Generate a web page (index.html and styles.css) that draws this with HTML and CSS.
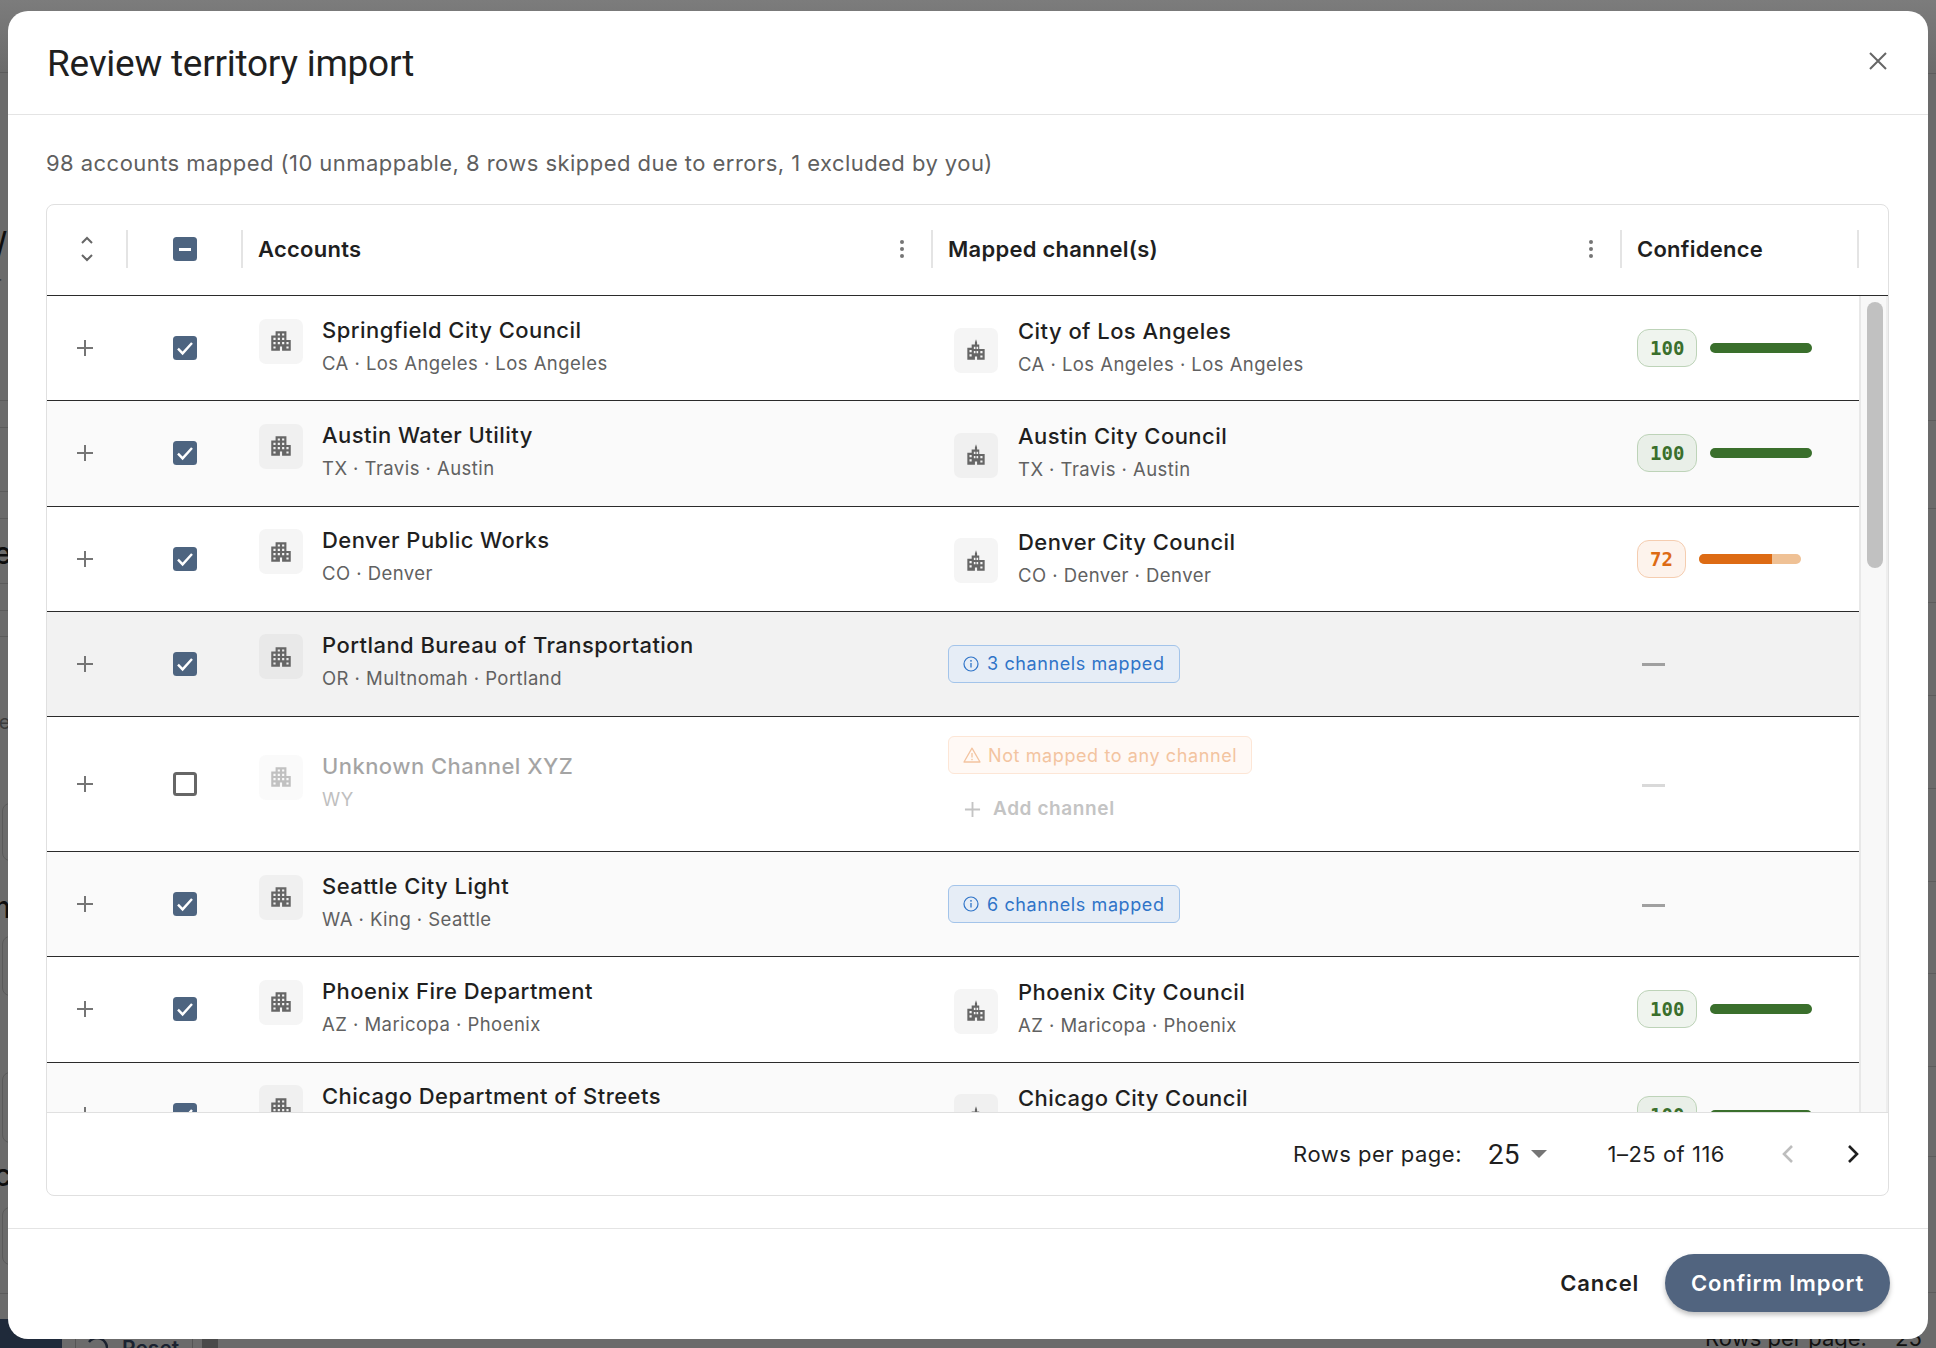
FILE: index.html
```html
<!DOCTYPE html>
<html lang="en">
<head>
  <meta charset="UTF-8" />
  <title>Review territory import</title>
  <link rel="stylesheet" href="styles.css">
</head>
<body>
  <svg class="defs" width="0" height="0">
    <symbol id="i-apartment" viewBox="0 0 24 24"><path d="M17 11V3H7v4H3v14h8v-4h2v4h8V11h-4zM7 19H5v-2h2v2zm0-4H5v-2h2v2zm0-4H5V9h2v2zm4 4H9v-2h2v2zm0-4H9V9h2v2zm0-4H9V5h2v2zm4 8h-2v-2h2v2zm0-4h-2V9h2v2zm0-4h-2V5h2v2zm4 12h-2v-2h2v2zm0-4h-2v-2h2v2z"/></symbol>
    <symbol id="i-tower" viewBox="0 0 24 24"><path fill-rule="evenodd" d="M12 2l1 3v2h2v4h5v10h-7v-3h-2v3H4V10h4V7h3V5zM6 12v2h2v-2zm0 4v2h2v-2zm4-7v2h1.5V9zm2.5 0v2H14V9zM10 13v2h1.5v-2zm2.5 0v2H14v-2zM16 13v2h2v-2zm0 4v2h2v-2z"/></symbol>
    <symbol id="i-check" viewBox="0 0 24 24"><rect x="0" y="0" width="24" height="24" rx="3.5" fill="#4d6480"/><path d="M5 12.6l4.6 4.8L19 7" fill="none" stroke="#fff" stroke-width="2.4"/></symbol>
    <symbol id="i-plus" viewBox="0 0 18 18"><path d="M9 1v16M1 9h16" fill="none" stroke="currentColor" stroke-width="2"/></symbol>
    <symbol id="i-info" viewBox="0 0 16 16"><circle cx="8" cy="8" r="7" fill="none" stroke="currentColor" stroke-width="1.2"/><path d="M8 7v4.4" stroke="currentColor" stroke-width="1.3"/><circle cx="8" cy="4.8" r=".9" fill="currentColor"/></symbol>
    <symbol id="i-warn" viewBox="0 0 18 16"><path d="M9 1.2L17 15H1z" fill="none" stroke="currentColor" stroke-width="1.3" stroke-linejoin="round"/><path d="M9 6v4.6" stroke="currentColor" stroke-width="1.3"/><circle cx="9" cy="12.6" r=".8" fill="currentColor"/></symbol>
    <symbol id="i-kebab" viewBox="0 0 6 20"><circle cx="3" cy="3" r="2"/><circle cx="3" cy="10" r="2"/><circle cx="3" cy="17" r="2"/></symbol>
  </svg>

  <!-- page that sits under the dialog -->
  <div class="under">
    <span class="under-line" style="top:72px"></span>
    <span class="under-line" style="top:400px"></span>
    <span class="under-line" style="top:427px"></span>
    <span class="under-line" style="top:491px"></span>
    <span class="under-line" style="top:518px"></span>
    <span class="under-line" style="top:583px"></span>
    <span class="under-line" style="top:610px"></span>
    <span class="under-line" style="top:636px"></span>
    <span class="under-line" style="top:1293px"></span>
    <span class="under-line right" style="top:73px"></span>
    <span class="under-line right" style="top:420px"></span>
    <span class="under-line right" style="top:508px"></span>
    <span class="under-line right" style="top:602px"></span>
    <span class="under-line right" style="top:695px"></span>
    <span class="under-line right" style="top:788px"></span>
    <span class="under-line right" style="top:881px"></span>
    <span class="under-line right" style="top:973px"></span>
    <span class="under-line right" style="top:1066px"></span>
    <span class="under-line right" style="top:1156px"></span>
    <span class="under-line right" style="top:1292px"></span>
    <span class="under-text big slash" style="top:228px">/</span>
    <span class="under-text soft" style="top:268px">r</span>
    <span class="under-text big" style="top:538px">e</span>
    <span class="under-text soft" style="top:707px">le</span>
    <span class="under-text big" style="top:892px">m</span>
    <span class="under-text big" style="top:1160px">c</span>
    <span class="under-box" style="top:803px;height:58px"></span>
    <span class="under-box" style="top:936px;height:60px"></span>
    <span class="under-box" style="top:1072px;height:71px"></span>
    <span class="under-box" style="top:1207px;height:58px"></span>
    <div class="under-nav"></div>
    <div class="under-reset">
      <svg viewBox="0 0 24 24"><path d="M5 6a10 10 0 1 1-2 6" fill="none" stroke="#1a2230" stroke-width="2.4"/></svg>
      Reset
    </div>
    <div class="under-sq"></div>
    <div class="under-rows">Rows per page: <b>25</b></div>
  </div>

  <div class="dialog">
    <header class="dialog-head">
      <h1>Review territory import</h1>
      <svg class="close" viewBox="0 0 20 20"><path d="M2 2l16 16M18 2L2 18" fill="none" stroke="#666" stroke-width="2"/></svg>
    </header>

    <div class="dialog-body">
      <p class="summary">98 accounts mapped (10 unmappable, 8 rows skipped due to errors, 1 excluded by you)</p>

      <div class="table">
        <div class="thead">
          <div class="th th-center">
            <svg class="sort" viewBox="0 0 14 26"><path d="M2 7l5-5 5 5M2 19l5 5 5-5" fill="none" stroke="#666" stroke-width="2"/></svg>
          </div>
          <div class="th th-center"><span class="box-minus"></span></div>
          <div class="th">Accounts<svg class="kebab"><use href="#i-kebab"/></svg></div>
          <div class="th">Mapped channel(s)<svg class="kebab"><use href="#i-kebab"/></svg></div>
          <div class="th">Confidence</div>
        </div>

        <div class="tbody">
          <div class="rows">
            <div class="row">
              <div class="c-toggle"><svg class="plus"><use href="#i-plus"/></svg></div>
              <div class="c-check"><svg class="box"><use href="#i-check"/></svg></div>
              <div class="account">
                <span class="org"><svg><use href="#i-apartment"/></svg></span>
                <div class="org-text"><div class="name">Springfield City Council</div><div class="sub">CA · Los Angeles · Los Angeles</div></div>
              </div>
              <div class="mapped">
                <span class="org"><svg><use href="#i-tower"/></svg></span>
                <div class="org-text"><div class="name">City of Los Angeles</div><div class="sub">CA · Los Angeles · Los Angeles</div></div>
              </div>
              <div class="conf"><span class="score">100</span><span class="bar"><i class="fill" style="width:100%"></i></span></div>
            </div>

            <div class="row alt">
              <div class="c-toggle"><svg class="plus"><use href="#i-plus"/></svg></div>
              <div class="c-check"><svg class="box"><use href="#i-check"/></svg></div>
              <div class="account">
                <span class="org"><svg><use href="#i-apartment"/></svg></span>
                <div class="org-text"><div class="name">Austin Water Utility</div><div class="sub">TX · Travis · Austin</div></div>
              </div>
              <div class="mapped">
                <span class="org"><svg><use href="#i-tower"/></svg></span>
                <div class="org-text"><div class="name">Austin City Council</div><div class="sub">TX · Travis · Austin</div></div>
              </div>
              <div class="conf"><span class="score">100</span><span class="bar"><i class="fill" style="width:100%"></i></span></div>
            </div>

            <div class="row">
              <div class="c-toggle"><svg class="plus"><use href="#i-plus"/></svg></div>
              <div class="c-check"><svg class="box"><use href="#i-check"/></svg></div>
              <div class="account">
                <span class="org"><svg><use href="#i-apartment"/></svg></span>
                <div class="org-text"><div class="name">Denver Public Works</div><div class="sub">CO · Denver</div></div>
              </div>
              <div class="mapped">
                <span class="org"><svg><use href="#i-tower"/></svg></span>
                <div class="org-text"><div class="name">Denver City Council</div><div class="sub">CO · Denver · Denver</div></div>
              </div>
              <div class="conf mid"><span class="score">72</span><span class="bar"><i class="fill" style="width:72%"></i></span></div>
            </div>

            <div class="row hover">
              <div class="c-toggle"><svg class="plus"><use href="#i-plus"/></svg></div>
              <div class="c-check"><svg class="box"><use href="#i-check"/></svg></div>
              <div class="account">
                <span class="org"><svg><use href="#i-apartment"/></svg></span>
                <div class="org-text"><div class="name">Portland Bureau of Transportation</div><div class="sub">OR · Multnomah · Portland</div></div>
              </div>
              <div class="mapped-chip"><span class="chip"><svg><use href="#i-info"/></svg>3 channels mapped</span></div>
              <div class="conf"><span class="dash"></span></div>
            </div>

            <div class="row tall">
              <div class="c-toggle"><svg class="plus"><use href="#i-plus"/></svg></div>
              <div class="c-check"><span class="box-empty"></span></div>
              <div class="account off">
                <span class="org"><svg><use href="#i-apartment"/></svg></span>
                <div class="org-text"><div class="name">Unknown Channel XYZ</div><div class="sub">WY</div></div>
              </div>
              <div class="mapped-chip stack">
                <span class="chip warn"><svg><use href="#i-warn"/></svg>Not mapped to any channel</span>
                <span class="add"><svg><use href="#i-plus"/></svg>Add channel</span>
              </div>
              <div class="conf off"><span class="dash"></span></div>
            </div>

            <div class="row alt">
              <div class="c-toggle"><svg class="plus"><use href="#i-plus"/></svg></div>
              <div class="c-check"><svg class="box"><use href="#i-check"/></svg></div>
              <div class="account">
                <span class="org"><svg><use href="#i-apartment"/></svg></span>
                <div class="org-text"><div class="name">Seattle City Light</div><div class="sub">WA · King · Seattle</div></div>
              </div>
              <div class="mapped-chip"><span class="chip"><svg><use href="#i-info"/></svg>6 channels mapped</span></div>
              <div class="conf"><span class="dash"></span></div>
            </div>

            <div class="row">
              <div class="c-toggle"><svg class="plus"><use href="#i-plus"/></svg></div>
              <div class="c-check"><svg class="box"><use href="#i-check"/></svg></div>
              <div class="account">
                <span class="org"><svg><use href="#i-apartment"/></svg></span>
                <div class="org-text"><div class="name">Phoenix Fire Department</div><div class="sub">AZ · Maricopa · Phoenix</div></div>
              </div>
              <div class="mapped">
                <span class="org"><svg><use href="#i-tower"/></svg></span>
                <div class="org-text"><div class="name">Phoenix City Council</div><div class="sub">AZ · Maricopa · Phoenix</div></div>
              </div>
              <div class="conf"><span class="score">100</span><span class="bar"><i class="fill" style="width:100%"></i></span></div>
            </div>

            <div class="row alt">
              <div class="c-toggle"><svg class="plus"><use href="#i-plus"/></svg></div>
              <div class="c-check"><svg class="box"><use href="#i-check"/></svg></div>
              <div class="account">
                <span class="org"><svg><use href="#i-apartment"/></svg></span>
                <div class="org-text"><div class="name">Chicago Department of Streets</div><div class="sub">IL · Cook · Chicago</div></div>
              </div>
              <div class="mapped">
                <span class="org"><svg><use href="#i-tower"/></svg></span>
                <div class="org-text"><div class="name">Chicago City Council</div><div class="sub">IL · Cook · Chicago</div></div>
              </div>
              <div class="conf"><span class="score">100</span><span class="bar"><i class="fill" style="width:100%"></i></span></div>
            </div>
          </div>
          <div class="track"><div class="thumb"></div></div>
        </div>

        <div class="pager">
          <span class="pager-label">Rows per page:</span>
          <span class="pager-size">25</span>
          <span class="pager-caret"></span>
          <span class="pager-range">1–25 of 116</span>
          <svg class="chev dim" viewBox="0 0 14 20"><path d="M11 2L3 10l8 8" fill="none" stroke="currentColor" stroke-width="2.6"/></svg>
          <svg class="chev" viewBox="0 0 14 20"><path d="M3 2l8 8-8 8" fill="none" stroke="currentColor" stroke-width="2.6"/></svg>
        </div>
      </div>
    </div>

    <footer class="dialog-actions">
      <button class="btn-text">Cancel</button>
      <button class="btn-primary">Confirm Import</button>
    </footer>
  </div>
</body>
</html>
```

FILE: styles.css
```css
* { box-sizing: border-box; }

html, body { height: 100%; }

body {
  margin: 0;
  height: 1348px;
  overflow: hidden;
  position: relative;
  padding: 11px 8px 9px;
  font-family: Inter, "Liberation Sans", sans-serif;
  color: #1f1f1f;
  background: linear-gradient(#7c7c7c, #6b6b6b 70px);
}

.defs { position: absolute; }

/* page under the dialog */
.under { position: absolute; inset: 0; overflow: hidden; }
.under-line { position: absolute; left: 0; width: 10px; height: 1px; background: #5c5c5c; }
.under-line.right { left: auto; right: 0; }
.under-text { position: absolute; left: -6px; font-size: 24px; line-height: 30px; }
.under-text.big { color: #0d0d0d; font-weight: 500; font-size: 30px; }
.under-text.slash { left: -4px; }
.under-text.soft { color: #3c3c3c; font-size: 20px; }
.under-box { position: absolute; left: 2px; width: 20px; border: 1px solid #5a5a5a; border-radius: 8px; }
.under-nav { position: absolute; left: 0; top: 1319px; width: 62px; height: 29px; background: #1f2a3a; }
.under-reset {
  position: absolute; left: 75px; top: 1326px; width: 118px; height: 44px;
  display: flex; align-items: center; gap: 14px;
  padding-left: 8px; border: 1px solid #555; border-radius: 10px;
  font-size: 21px; font-weight: 600; color: #1a2230;
}
.under-reset svg { width: 24px; height: 24px; flex: none; }
.under-sq { position: absolute; left: 202px; top: 1339px; width: 16px; height: 9px; background: #4a4a4a; }
.under-rows { position: absolute; left: 1705px; top: 1325px; font-size: 22px; color: #111; white-space: nowrap; }
.under-rows b { font-weight: 400; margin-left: 22px; }

/* dialog */
.dialog {
  position: relative;
  height: 1328px;
  display: flex;
  flex-direction: column;
  background: #fff;
  border-radius: 20px;
}

.dialog-head {
  height: 104px;
  flex: none;
  display: flex;
  align-items: center;
  justify-content: space-between;
  padding: 0 40px 0 39px;
  border-bottom: 1px solid #e4e4e4;
}
.dialog-head h1 {
  margin: 2px 0 0;
  font-family: Roboto, sans-serif;
  font-size: 37px;
  font-weight: 400;
  letter-spacing: -.25px;
  line-height: 44px;
  color: #1f1f1f;
}
.close { width: 20px; height: 20px; margin-bottom: 4px; }

.dialog-body {
  flex: 1;
  min-height: 0;
  display: flex;
  flex-direction: column;
  padding: 36px 39px 32px 38px;
}
.summary {
  margin: 0 0 29px;
  font-size: 22px;
  line-height: 24px;
  letter-spacing: .45px;
  color: #5f5f5f;
}

.table {
  flex: 1;
  min-height: 0;
  display: flex;
  flex-direction: column;
  border: 1px solid #e0e0e0;
  border-radius: 8px;
  overflow: hidden;
}

.thead, .row {
  display: grid;
  grid-template-columns: 81px 115px 690px 689px 237px;
}
.thead {
  flex: none;
  height: 91px;
  align-items: center;
  border-bottom: 1px solid #2b2b2b;
  padding-bottom: 2px;
}
.th {
  height: 38px;
  display: flex;
  align-items: center;
  justify-content: space-between;
  padding: 0 26px 0 15px;
  border-right: 2px solid #e4e4e4;
  font-size: 22px;
  font-weight: 600;
  letter-spacing: .25px;
  color: #1f1f1f;
}
.th-center { justify-content: center; padding: 0; }
.sort { width: 14px; height: 26px; }
.box-minus {
  position: relative;
  width: 24px;
  height: 24px;
  border-radius: 3.5px;
  background: #4d6480;
}
.box-minus::after {
  content: "";
  position: absolute;
  left: 6px; right: 6px; top: 10.5px;
  height: 3px;
  background: #fff;
}
.kebab { width: 6px; height: 20px; fill: #757575; }

.tbody { flex: 1; min-height: 0; display: flex; overflow: hidden; }
.rows { flex: none; width: 1812px; }

.row { height: 105.25px; align-items: center; border-bottom: 1px solid #2b2b2b; }
.row.alt { background: #fafafa; }
.row.hover { background: #f2f2f2; }
.row.tall { height: 135px; }

.c-toggle, .c-check { display: flex; justify-content: center; }
.c-toggle { padding-right: 5px; color: #757575; }
.c-check { padding-right: 1px; }
.plus { width: 18px; height: 18px; }
.box { width: 24px; height: 24px; display: block; }
.box-empty {
  width: 24px;
  height: 24px;
  border: 3px solid #666;
  border-radius: 3.5px;
}

.account, .mapped { display: flex; align-items: flex-start; gap: 19px; }
.account { padding-left: 16px; margin-bottom: 3px; }
.mapped { padding-left: 21px; align-items: center; gap: 20px; }
.mapped .org { margin-top: 4px; }
.org {
  flex: none;
  width: 44px;
  height: 45px;
  display: flex;
  align-items: center;
  justify-content: center;
  border-radius: 7px;
  background: #f5f5f5;
}
.row.alt .org { background: #f0f0f0; }
.row.hover .org { background: #e9e9e9; }
.org svg { width: 26px; height: 26px; fill: #666; }
.org-text { margin-top: -3px; }
.name { font-size: 22px; font-weight: 500; letter-spacing: .45px; line-height: 28px; color: #1f1f1f; }
.sub { margin-top: 7px; font-size: 18.5px; line-height: 24px; letter-spacing: .45px; color: #616161; }

.off { opacity: .4; }

.mapped-chip { padding-left: 15px; }
.mapped-chip.stack { display: flex; flex-direction: column; align-items: flex-start; margin-top: -11px; }
.chip {
  display: inline-flex;
  align-items: center;
  gap: 8px;
  height: 38px;
  padding: 0 14px;
  border: 1px solid #a3c4ea;
  border-radius: 6px;
  background: #e6edf6;
  font-size: 18px;
  letter-spacing: .6px;
  color: #2f74c8;
}
.chip svg { width: 16px; height: 16px; }
.chip.warn {
  gap: 7px;
  border-color: #fde6d6;
  background: #fff9f5;
  color: #f3c4a0;
}
.chip.warn svg { width: 18px; height: 16px; }
.add {
  display: flex;
  align-items: center;
  gap: 12px;
  margin: 23px 0 0 16px;
  font-size: 19px;
  font-weight: 600;
  letter-spacing: .6px;
  line-height: 24px;
  color: #c4c4c4;
}
.add svg { width: 17px; height: 17px; }

.conf { display: flex; align-items: center; gap: 13px; padding-left: 15px; }
.score {
  height: 38px;
  padding: 0 12px;
  display: flex;
  align-items: center;
  border: 1px solid #bdd3b8;
  border-radius: 12px;
  background: #eff4ee;
  font-family: "DejaVu Sans Mono", monospace;
  font-size: 19px;
  font-weight: 700;
  color: #3a6f2c;
}
.row.alt .score { background: #e9efe8; }
.bar { width: 102px; height: 10px; border-radius: 5px; overflow: hidden; background: #efc195; }
.fill { display: block; height: 100%; background: #3a6f2c; }
.conf.mid .score { border-color: #f5cdb0; background: #fdf3ec; color: #dd6b14; }
.conf.mid .fill { background: #dd6b14; }
.dash { width: 23px; height: 3px; margin: 2px 0 0 5px; background: #a0a0a0; }

.track {
  flex: 1;
  padding: 6px 3px 0 6px;
  background: #f8f8f8;
  border-left: 2px solid #e8e8e8;
  border-right: 2px solid #eeeeee;
}
.thumb { width: 16px; height: 266px; border-radius: 8px; background: #c1c1c1; }

.pager {
  flex: none;
  height: 83px;
  display: flex;
  align-items: center;
  justify-content: flex-end;
  padding-right: 28px;
  border-top: 1px solid #e0e0e0;
  font-size: 22px;
  letter-spacing: .5px;
  color: #1f1f1f;
}
.pager-size { margin-left: 26px; font-family: Roboto, sans-serif; font-size: 28px; letter-spacing: 0; }
.pager-caret {
  margin-left: 11px;
  border-left: 8px solid transparent;
  border-right: 8px solid transparent;
  border-top: 8px solid #757575;
}
.pager-range { margin: 0 0 0 61px; }
.chev { width: 14px; height: 20px; margin-left: 56px; color: #1f1f1f; }
.chev.dim { color: #bdbdbd; }
.chev + .chev { margin-left: 51px; }

.dialog-actions {
  flex: none;
  height: 111px;
  display: flex;
  align-items: center;
  justify-content: flex-end;
  gap: 26px;
  padding: 0 38px 2px 0;
  border-top: 1px solid #e4e4e4;
}
.dialog-actions button {
  font-family: inherit;
  font-size: 22px;
  font-weight: 600;
  letter-spacing: .8px;
  border: none;
  cursor: pointer;
}
.btn-text { background: none; padding: 0; color: #1f1f1f; }
.btn-primary {
  width: 225px;
  height: 58px;
  border-radius: 29px;
  color: #fff;
  background: #51647f;
  box-shadow: 0 3px 5px rgba(0, 0, 0, .25);
}
```
